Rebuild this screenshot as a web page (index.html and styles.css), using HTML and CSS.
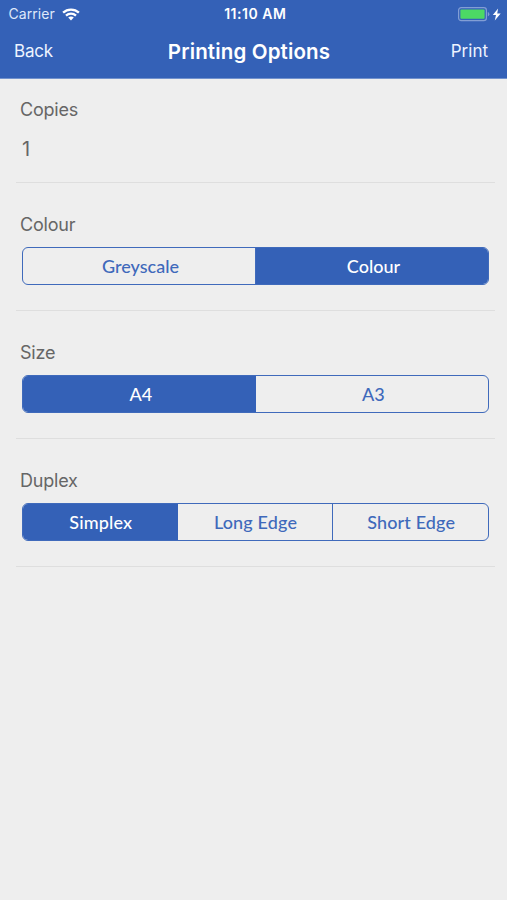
FILE: index.html
```html
<!DOCTYPE html>
<html lang="en">
<head>
<meta charset="utf-8">
<title>Printing Options</title>
<link rel="stylesheet" href="styles.css">
</head>
<body>
<header class="header">
  <div class="status">
    <div class="carrier"><span>Carrier</span>
      <svg class="wifi" width="18" height="13" viewBox="0 0 18 13" fill="none" stroke="#fff" stroke-width="2.3"><path d="M1.1 4.7C5.5.5 12.5.5 16.9 4.7M4 7.6c2.8-2.6 7.2-2.6 10 0"/><path d="M6.2 9.6c1.6-1.4 4-1.4 5.6 0L9 12.5z" fill="#fff" stroke="none"/></svg>
    </div>
    <span class="time">11:10 AM</span>
    <div class="power">
      <svg width="44" height="15" viewBox="0 0 44 15"><rect x=".6" y=".6" width="27.8" height="13" rx="2.6" fill="none" stroke="#829ed5" stroke-width="1.2"/><rect x="2.4" y="2.4" width="24.2" height="9.4" rx="1" fill="#4cd964"/><path d="M29.8 5v4.4q1.6-.6 1.6-2.2T29.8 5z" fill="#829ed5"/><path d="M40.1 1.4 34.8 8h3.2l-1.2 5.4L42.7 6.4h-3.5z" fill="#fff"/></svg>
    </div>
  </div>
  <nav class="nav">
    <span class="action">Back</span>
    <h1 class="title">Printing Options</h1>
    <span class="action right">Print</span>
  </nav>
</header>
<main class="options">
  <section class="option copies">
    <h2 class="label">Copies</h2>
    <div class="value">1</div>
  </section>
  <section class="option">
    <h2 class="label">Colour</h2>
    <div class="segments"><span class="segment">Greyscale</span><span class="segment selected">Colour</span></div>
  </section>
  <section class="option">
    <h2 class="label">Size</h2>
    <div class="segments"><span class="segment selected">A4</span><span class="segment">A3</span></div>
  </section>
  <section class="option">
    <h2 class="label">Duplex</h2>
    <div class="segments triple"><span class="segment selected">Simplex</span><span class="segment">Long Edge</span><span class="segment">Short Edge</span></div>
  </section>
</main>
</body>
</html>
```
FILE: styles.css
```css
* { box-sizing: border-box; }
body { margin: 0; min-height: 900px; background: #eee; color: #666; font-family: Inter, "Liberation Sans", sans-serif; }
h1, h2 { margin: 0; }
.header { height: 79px; background: #3461b7; border-bottom: 1px solid #7292cd; color: #fff; }
.status { height: 28px; padding: 0 5px 0 8.5px; display: grid; grid-template-columns: 1fr auto 1fr; align-items: center; font-size: 14px; line-height: 28px; }
.carrier { display: flex; align-items: center; gap: 7px; color: #dfe8fa; letter-spacing: .05px; }
.wifi { display: block; }
.time { font-weight: 600; letter-spacing: .5px; font-size: 14px; }
.power { display: flex; justify-content: flex-end; }
.power svg { display: block; }
.nav { height: 46px; padding: 0 19px 0 14px; display: grid; grid-template-columns: 1fr auto 1fr; align-items: center; }
.action { font-size: 17px; line-height: 44px; letter-spacing: -.2px; color: #eef4ff; padding-bottom: 1px; }
.right { text-align: right; letter-spacing: 0; }
.title { font-size: 20.5px; line-height: 46px; font-weight: 600; letter-spacing: .15px; margin: 1px 4px 0 0; }
.options { padding: 0 12px 0 16px; }
.option { height: 128.2px; padding: 31px 6px 0 5px; border-bottom: 1px solid #dedede; }
.copies { height: 103.6px; padding-top: 20px; }
.label { margin-left: -1px; font-size: 18px; line-height: 22px; font-weight: 400; letter-spacing: -.2px; }
.value { margin: 15px 0 0 1px; font-size: 20px; line-height: 26px; }
.segments { height: 38px; margin: 11px 0 0 1px; display: flex; border: 1px solid #3f6abb; border-radius: 6px; overflow: hidden; }
.segment { flex: 1 1 0; text-align: center; line-height: 36px; padding-left: 3px; font-family: Lato, sans-serif; font-size: 18px; font-weight: 500; color: #3e69bb; }
.triple .segment { padding-left: 1px; letter-spacing: .15px; }
.segment + .segment { border-left: 1px solid #3f6abb; }
.segment.selected { background: #3461b7; color: #fff; }
.segment.selected + .segment { border-left: 0; }
```
